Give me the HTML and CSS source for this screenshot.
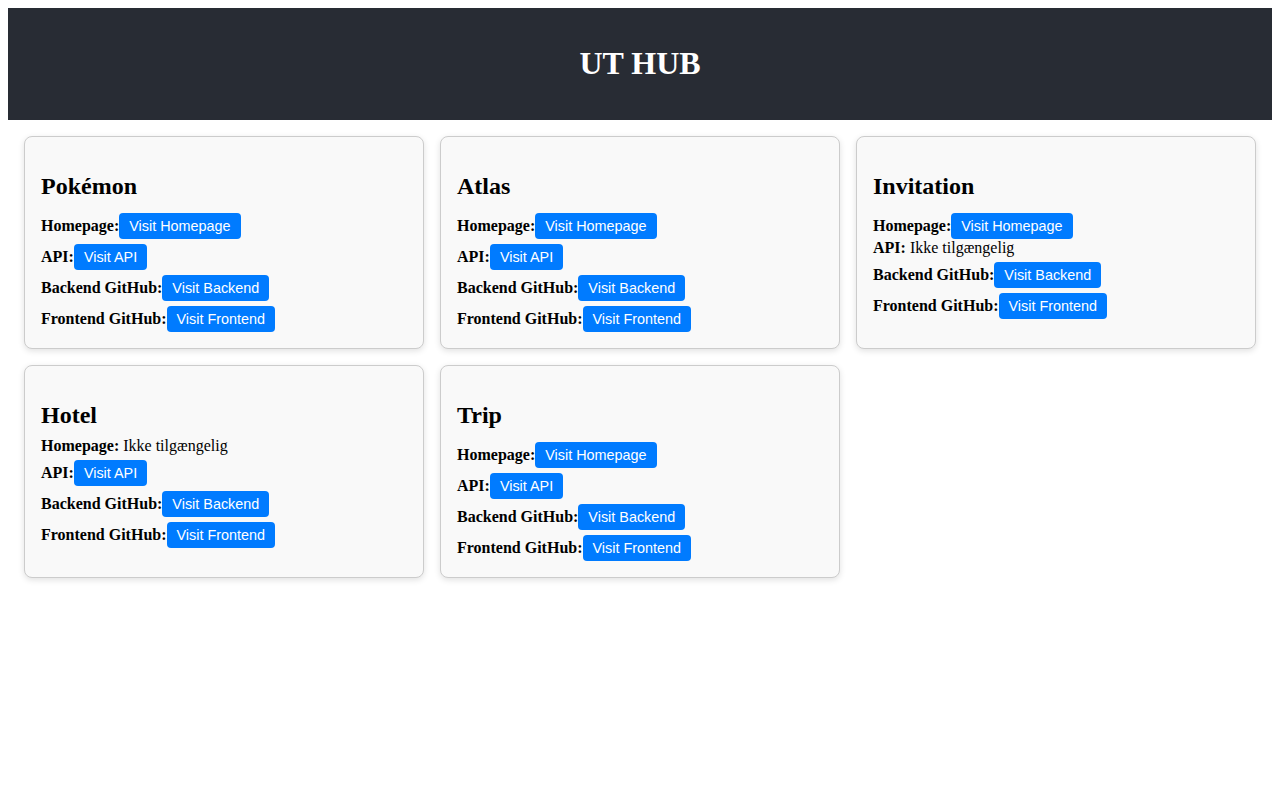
FILE: index.html
```html
<!DOCTYPE html>
<html lang="da">
<head>
<meta charset="utf-8">
<title>UT HUB</title>
<link rel="stylesheet" href="styles.css">
</head>
<body>
<header class="app-header">
  <h1 class="app-title">UT HUB</h1>
</header>
<main class="grid">
  <section class="card">
    <h2 class="card-title">Pokémon</h2>
    <div class="row"><strong>Homepage:</strong><a class="btn" href="#">Visit Homepage</a></div>
    <div class="row"><strong>API:</strong><a class="btn" href="#">Visit API</a></div>
    <div class="row"><strong>Backend GitHub:</strong><a class="btn" href="#">Visit Backend</a></div>
    <div class="row"><strong>Frontend GitHub:</strong><a class="btn" href="#">Visit Frontend</a></div>
  </section>
  <section class="card">
    <h2 class="card-title">Atlas</h2>
    <div class="row"><strong>Homepage:</strong><a class="btn" href="#">Visit Homepage</a></div>
    <div class="row"><strong>API:</strong><a class="btn" href="#">Visit API</a></div>
    <div class="row"><strong>Backend GitHub:</strong><a class="btn" href="#">Visit Backend</a></div>
    <div class="row"><strong>Frontend GitHub:</strong><a class="btn" href="#">Visit Frontend</a></div>
  </section>
  <section class="card">
    <h2 class="card-title">Invitation</h2>
    <div class="row"><strong>Homepage:</strong><a class="btn" href="#">Visit Homepage</a></div>
    <div class="row"><strong>API:</strong> Ikke tilgængelig</div>
    <div class="row"><strong>Backend GitHub:</strong><a class="btn" href="#">Visit Backend</a></div>
    <div class="row"><strong>Frontend GitHub:</strong><a class="btn" href="#">Visit Frontend</a></div>
  </section>
  <section class="card">
    <h2 class="card-title">Hotel</h2>
    <div class="row"><strong>Homepage:</strong> Ikke tilgængelig</div>
    <div class="row"><strong>API:</strong><a class="btn" href="#">Visit API</a></div>
    <div class="row"><strong>Backend GitHub:</strong><a class="btn" href="#">Visit Backend</a></div>
    <div class="row"><strong>Frontend GitHub:</strong><a class="btn" href="#">Visit Frontend</a></div>
  </section>
  <section class="card">
    <h2 class="card-title">Trip</h2>
    <div class="row"><strong>Homepage:</strong><a class="btn" href="#">Visit Homepage</a></div>
    <div class="row"><strong>API:</strong><a class="btn" href="#">Visit API</a></div>
    <div class="row"><strong>Backend GitHub:</strong><a class="btn" href="#">Visit Backend</a></div>
    <div class="row"><strong>Frontend GitHub:</strong><a class="btn" href="#">Visit Frontend</a></div>
  </section>
</main>
</body>
</html>
```

FILE: styles.css
```css
body {
  margin: 8px;
  font-family: "Liberation Serif", "Times New Roman", serif;
  font-size: 16px;
  color: #000;
  background: #fff;
}

.app-header {
  background: #282c34;
  color: #fff;
  text-align: center;
  padding: 16px;
}

.app-title {
  font-size: 32px;
  margin: 21.44px 0;
  font-weight: bold;
}

.grid {
  display: grid;
  grid-template-columns: repeat(3, 1fr);
  gap: 16px;
  padding: 16px;
}

.card {
  background: #f9f9f9;
  border: 1px solid #ccc;
  border-radius: 8px;
  padding: 16px;
  box-shadow: 0 2px 6px rgba(0, 0, 0, 0.12);
}

.card-title {
  font-size: 24px;
  margin: 19.92px 0 8px;
}

.row {
  line-height: normal;
}

.btn {
  display: inline-block;
  margin-top: 5px;
  padding: 5px 10px;
  background: #007bff;
  color: #fff;
  border-radius: 4px;
  text-decoration: none;
  font-family: "Liberation Sans", Arial, sans-serif;
  font-size: 14.4px;
  line-height: 16px;
  vertical-align: baseline;
}
```
